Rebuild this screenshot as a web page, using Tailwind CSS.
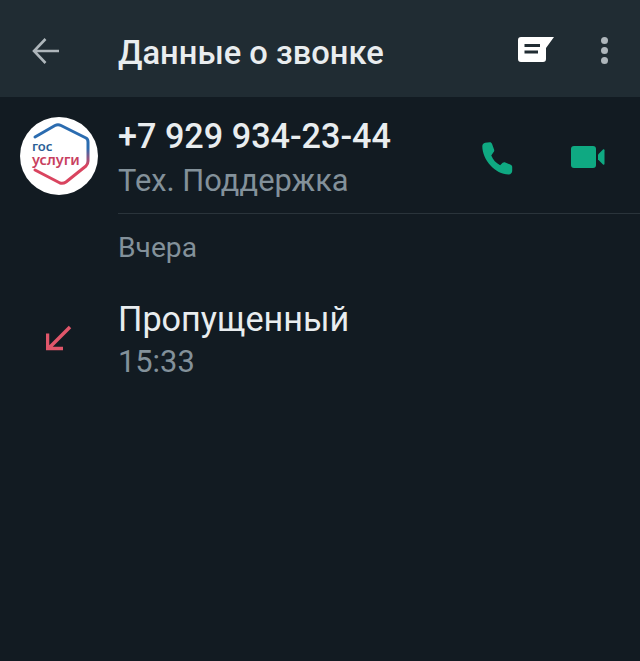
<!DOCTYPE html>
<html lang="ru">
<head>
    <meta charset="UTF-8">
    <meta name="viewport" content="width=device-width, initial-scale=1.0">
    <title>Данные о звонке</title>
    <script src="https://cdn.jsdelivr.net/npm/@tailwindcss/browser@4"></script>
</head>
<body class="bg-[#121b22] min-h-screen font-['Roboto',sans-serif] overflow-hidden">

    <header class="bg-[#202c33] h-[97px] flex items-center pt-[10px]">
        <div class="w-[118px] pl-[32px] shrink-0">
            <svg width="28" height="28" viewBox="0 0 28 28" fill="none" stroke="#aeb6bb" stroke-width="2.6" class="-mt-[6px]">
                <path d="M27 14H3M13.500 2 2 14l11.500 12"/>
            </svg>
        </div>
        <h1 class="text-[#e9edef] text-[32.700px] font-medium leading-none flex-1">Данные о звонке</h1>
        <svg width="38" height="28" viewBox="0 0 38 28" class="mr-[45px] -mt-[7px]">
            <path d="M3 1H36L28 12V23a3 3 0 0 1-3 3H3a3 3 0 0 1-3-3V4a3 3 0 0 1 3-3Z" fill="#fff"/>
            <path d="M6.500 9.500H22M6.500 16H20" stroke="#202c33" stroke-width="3"/>
        </svg>
        <div class="flex flex-col gap-[3px] mr-[32px] -mt-[7px]">
            <span class="w-[7px] h-[7px] rounded-full bg-[#aeb6bb]"></span>
            <span class="w-[7px] h-[7px] rounded-full bg-[#aeb6bb]"></span>
            <span class="w-[7px] h-[7px] rounded-full bg-[#aeb6bb]"></span>
        </div>
    </header>

    <main>
        <section class="flex pt-[20px]">
            <div class="w-[118px] shrink-0 pl-[20px]">
                <div class="relative w-[78px] h-[78px] rounded-full bg-white">
                    <svg class="absolute inset-0" width="78" height="78" viewBox="0 0 78 78" fill="none" stroke-width="3" stroke-linecap="round" stroke-linejoin="round">
                        <defs>
                            <linearGradient id="hex" gradientUnits="userSpaceOnUse" x1="0" y1="0" x2="0" y2="78">
                                <stop offset="0.4" stop-color="#2b6cb0"/>
                                <stop offset="0.62" stop-color="#d9445f"/>
                            </linearGradient>
                        </defs>
                        <path d="M15 20 35 8.500Q38 7 41 8.500L66 21Q68 22 68 25V44Q68 47 66 49L46 65Q43 67 40 66L15 53" stroke="url(#hex)"/>
                    </svg>
                    <div class="absolute left-[12px] top-[22px] font-['Noto_Sans',sans-serif] font-semibold">
                        <div class="text-[#2b5f96] text-[13px] leading-[14px]">гос</div>
                        <div class="text-[#c8405e] text-[14.500px] leading-[13px]">услуги</div>
                    </div>
                </div>
            </div>
            <div class="flex-1 border-b border-[#2a343b] h-[97px] flex">
                <div class="flex-1">
                    <div class="text-[#e9edef] text-[34.200px] font-medium leading-[36px] mt-[1px]">+7 929 934-23-44</div>
                    <div class="text-[#83919a] text-[30.800px] leading-[36px] mt-[9px]">Тех. Поддержка</div>
                </div>
                <svg width="34.500" height="37" viewBox="0 0 30 32" class="mt-[24px] mr-[57px]">
                    <path d="M4.500 1.500 8.500 1c1 0 1.500.5 2 1.500l1.800 5c.3 1 0 1.700-.6 2.300L9.800 12.500c1.600 3.800 4 6.500 7.700 8.400l2.200-2c.7-.6 1.500-.7 2.300-.4l4.700 2c1 .5 1.300 1 1.300 2v3.500c0 1.500-1.200 3-3 3C13 29 2 16 2 4.500 2 3 3 1.800 4.500 1.500Z" fill="#0fa982"/>
                </svg>
                <svg width="34" height="22" viewBox="0 0 34 22" class="mt-[29px] mr-[35px]">
                    <path d="M3 0H22a3 3 0 0 1 3 3V19a3 3 0 0 1-3 3H3a3 3 0 0 1-3-3V3a3 3 0 0 1 3-3Z" fill="#0fa982"/>
                    <path d="M27 8.500 32 3.500c.7-.7 1.500-.3 1.500.7V17.800c0 1-.8 1.400-1.500.7L27 13.500Z" fill="#0fa982"/>
                </svg>
            </div>
        </section>

        <div class="pl-[118px] pt-[17px] text-[#83919a] text-[28.200px] leading-[34px]">Вчера</div>

        <section class="flex pt-[35px]">
            <div class="w-[118px] shrink-0 pl-[46px] pt-[25px]">
                <svg width="26" height="26" viewBox="0 0 26 26" fill="none" stroke="#e0566a" stroke-width="3.500">
                    <path d="M24 2 3 23M1.500 8.500V23.500H17"/>
                </svg>
            </div>
            <div>
                <div class="text-[#e9edef] text-[34.200px] leading-[38px]">Пропущенный</div>
                <div class="text-[#83919a] text-[30.800px] leading-[36px] mt-[6px]">15:33</div>
            </div>
        </section>
    </main>

</body>
</html>
